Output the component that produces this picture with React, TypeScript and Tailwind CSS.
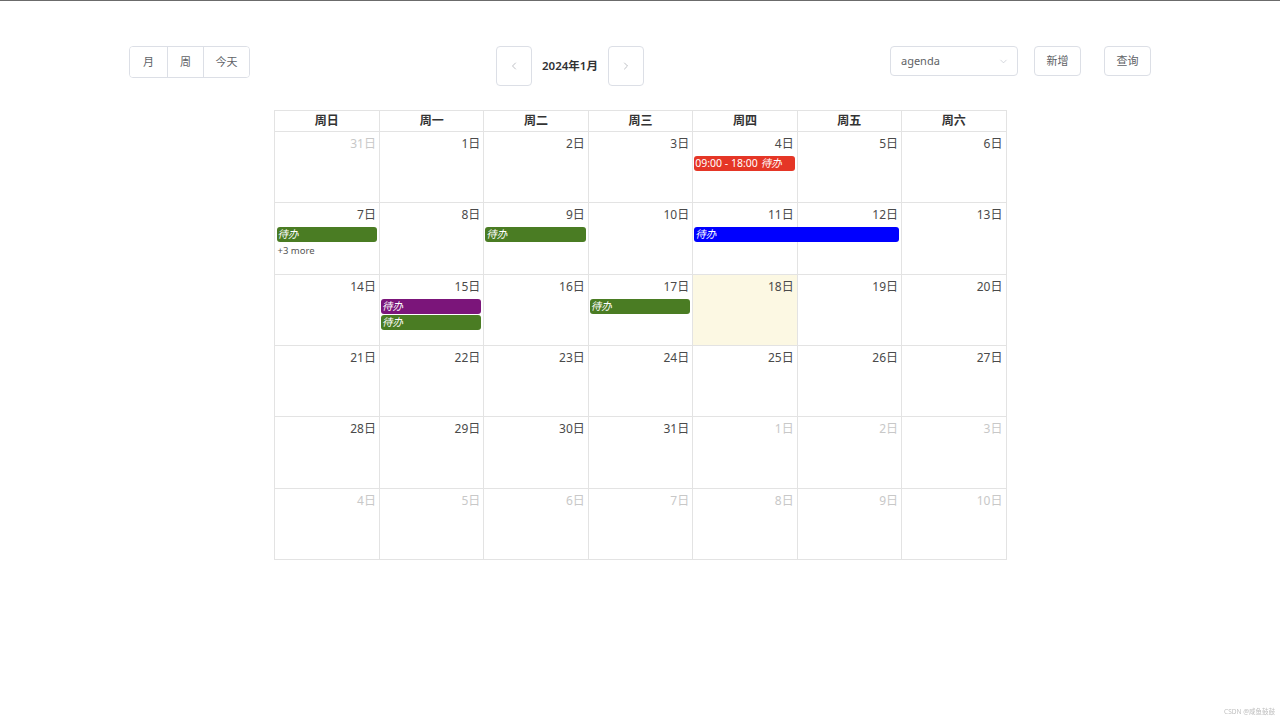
import React from 'react';
import { ChevronLeft, ChevronRight, ChevronDown } from 'lucide-react';

type CalEvent = { col: number; span: number; lane: number; color: string; time?: string; title: string };
type Week = { days: { n: number; out?: boolean }[]; events: CalEvent[]; more?: { col: number; lane: number; count: number } };

const weekdays = ['周日', '周一', '周二', '周三', '周四', '周五', '周六'];

const weeks: Week[] = [
  {
    days: [{ n: 31, out: true }, { n: 1 }, { n: 2 }, { n: 3 }, { n: 4 }, { n: 5 }, { n: 6 }],
    events: [{ col: 5, span: 1, lane: 0, color: 'bg-[#e53626]', time: '09:00 - 18:00', title: '待办' }],
  },
  {
    days: [{ n: 7 }, { n: 8 }, { n: 9 }, { n: 10 }, { n: 11 }, { n: 12 }, { n: 13 }],
    events: [
      { col: 1, span: 1, lane: 0, color: 'bg-[#4a7c23]', title: '待办' },
      { col: 3, span: 1, lane: 0, color: 'bg-[#4a7c23]', title: '待办' },
      { col: 5, span: 2, lane: 0, color: 'bg-[#0000ff]', title: '待办' },
    ],
    more: { col: 1, lane: 1, count: 3 },
  },
  {
    days: [{ n: 14 }, { n: 15 }, { n: 16 }, { n: 17 }, { n: 18 }, { n: 19 }, { n: 20 }],
    events: [
      { col: 2, span: 1, lane: 0, color: 'bg-[#7b157a]', title: '待办' },
      { col: 2, span: 1, lane: 1, color: 'bg-[#4a7c23]', title: '待办' },
      { col: 4, span: 1, lane: 0, color: 'bg-[#4a7c23]', title: '待办' },
    ],
  },
  { days: [{ n: 21 }, { n: 22 }, { n: 23 }, { n: 24 }, { n: 25 }, { n: 26 }, { n: 27 }], events: [] },
  {
    days: [{ n: 28 }, { n: 29 }, { n: 30 }, { n: 31 }, { n: 1, out: true }, { n: 2, out: true }, { n: 3, out: true }],
    events: [],
  },
  {
    days: [4, 5, 6, 7, 8, 9, 10].map((n) => ({ n, out: true })),
    events: [],
  },
];

const colStart = ['col-start-1', 'col-start-2', 'col-start-3', 'col-start-4', 'col-start-5', 'col-start-6', 'col-start-7'];
const colSpan = ['col-span-1', 'col-span-2', 'col-span-3'];
const laneRow = ['row-start-2', 'row-start-3'];

function WeekRow({ week, wi }: { week: Week; wi: number }) {
  return (
    <div className="grid grid-cols-7 grid-rows-[23px_auto_auto_1fr] h-[71.33px] border-t border-[#e3e3e3]">
      {week.days.map((d, i) => (
        <div
          key={'bg' + i}
          className={`${colStart[i]} row-[1/-1] ${i > 0 ? 'border-l border-[#e3e3e3]' : ''} ${
            wi === 2 && i === 4 ? 'bg-[#fcf8e3]' : ''
          }`}
        />
      ))}
      {week.days.map((d, i) => (
        <div
          key={'d' + i}
          className={`${colStart[i]} row-start-1 text-right pr-[3px] pt-[3px] text-[12px] leading-[18px] ${
            d.out ? 'text-[#c8c8c8]' : 'text-[#4a4a4a]'
          }`}
        >
          {d.n}日
        </div>
      ))}
      {week.events.map((e, i) => (
        <div
          key={'e' + i}
          className={`${colStart[e.col - 1]} ${colSpan[e.span - 1]} ${laneRow[e.lane]} mx-[2px] mt-[1px] h-[15px] rounded-[3px] ${e.color} text-white text-[10.5px] leading-[15px] px-[1px] whitespace-nowrap overflow-hidden`}
        >
          {e.time && <span className="mr-[3px]">{e.time}</span>}
          <span className="italic">{e.title}</span>
        </div>
      ))}
      {week.more && (
        <div
          className={`${colStart[week.more.col - 1]} ${laneRow[week.more.lane]} pl-[3px] pt-[1px] text-[9.5px] leading-[15px] text-[#555555]`}
        >
          +{week.more.count} more
        </div>
      )}
    </div>
  );
}

export default function App() {
  const btn = 'h-[30px] text-[11px] text-[#606266] bg-white whitespace-nowrap';
  return (
    <div className="min-h-screen bg-white border-t border-[#6b6b6b] font-['Noto_Sans','Noto_Sans_CJK_SC',sans-serif]">
      <div className="w-[1022px] mx-auto pt-[45px] flex items-start justify-between">
        <div className="flex border border-[#dcdfe6] rounded-[4px] overflow-hidden">
          <button className={`${btn} w-[37px]`}>月</button>
          <button className={`${btn} w-[36px] border-l border-[#dcdfe6]`}>周</button>
          <button className={`${btn} w-[46px] border-l border-[#dcdfe6]`}>今天</button>
        </div>

        <div className="flex items-center gap-[10px]">
          <button className="w-[36px] h-[40px] flex items-center justify-center border border-[#dcdfe6] rounded-[4px] text-[#a8abb2]">
            <ChevronLeft className="w-[12px] h-[12px]" strokeWidth={1.5} />
          </button>
          <span className="text-[11.5px] font-semibold text-[#303133] whitespace-nowrap">2024年1月</span>
          <button className="w-[36px] h-[40px] flex items-center justify-center border border-[#dcdfe6] rounded-[4px] text-[#a8abb2]">
            <ChevronRight className="w-[12px] h-[12px]" strokeWidth={1.5} />
          </button>
        </div>

        <div className="flex items-center">
          <div className="w-[128px] h-[30px] flex items-center justify-between pl-[10px] pr-[8px] border border-[#dcdfe6] rounded-[4px] text-[11px] text-[#606266]">
            <span>agenda</span>
            <ChevronDown className="w-[11px] h-[11px] text-[#c0c4cc]" strokeWidth={1.5} />
          </div>
          <button className={`${btn} w-[47px] ml-[16px] border border-[#dcdfe6] rounded-[4px]`}>新增</button>
          <button className={`${btn} w-[47px] ml-[23px] border border-[#dcdfe6] rounded-[4px]`}>查询</button>
        </div>
      </div>

      <div className="w-[733px] mx-auto mt-[24px] border border-[#e3e3e3]">
        <div className="grid grid-cols-7 h-[20px]">
          {weekdays.map((w, i) => (
            <div
              key={w}
              className={`text-center text-[12px] leading-[20px] font-bold text-[#333333] ${i > 0 ? 'border-l border-[#e3e3e3]' : ''}`}
            >
              {w}
            </div>
          ))}
        </div>
        {weeks.map((wk, wi) => (
          <WeekRow key={wi} week={wk} wi={wi} />
        ))}
      </div>

      <div className="fixed right-[5px] bottom-[3px] text-[6.5px] text-[#c0c0c0]">CSDN @咸鱼鼓鼓</div>
    </div>
  );
}
